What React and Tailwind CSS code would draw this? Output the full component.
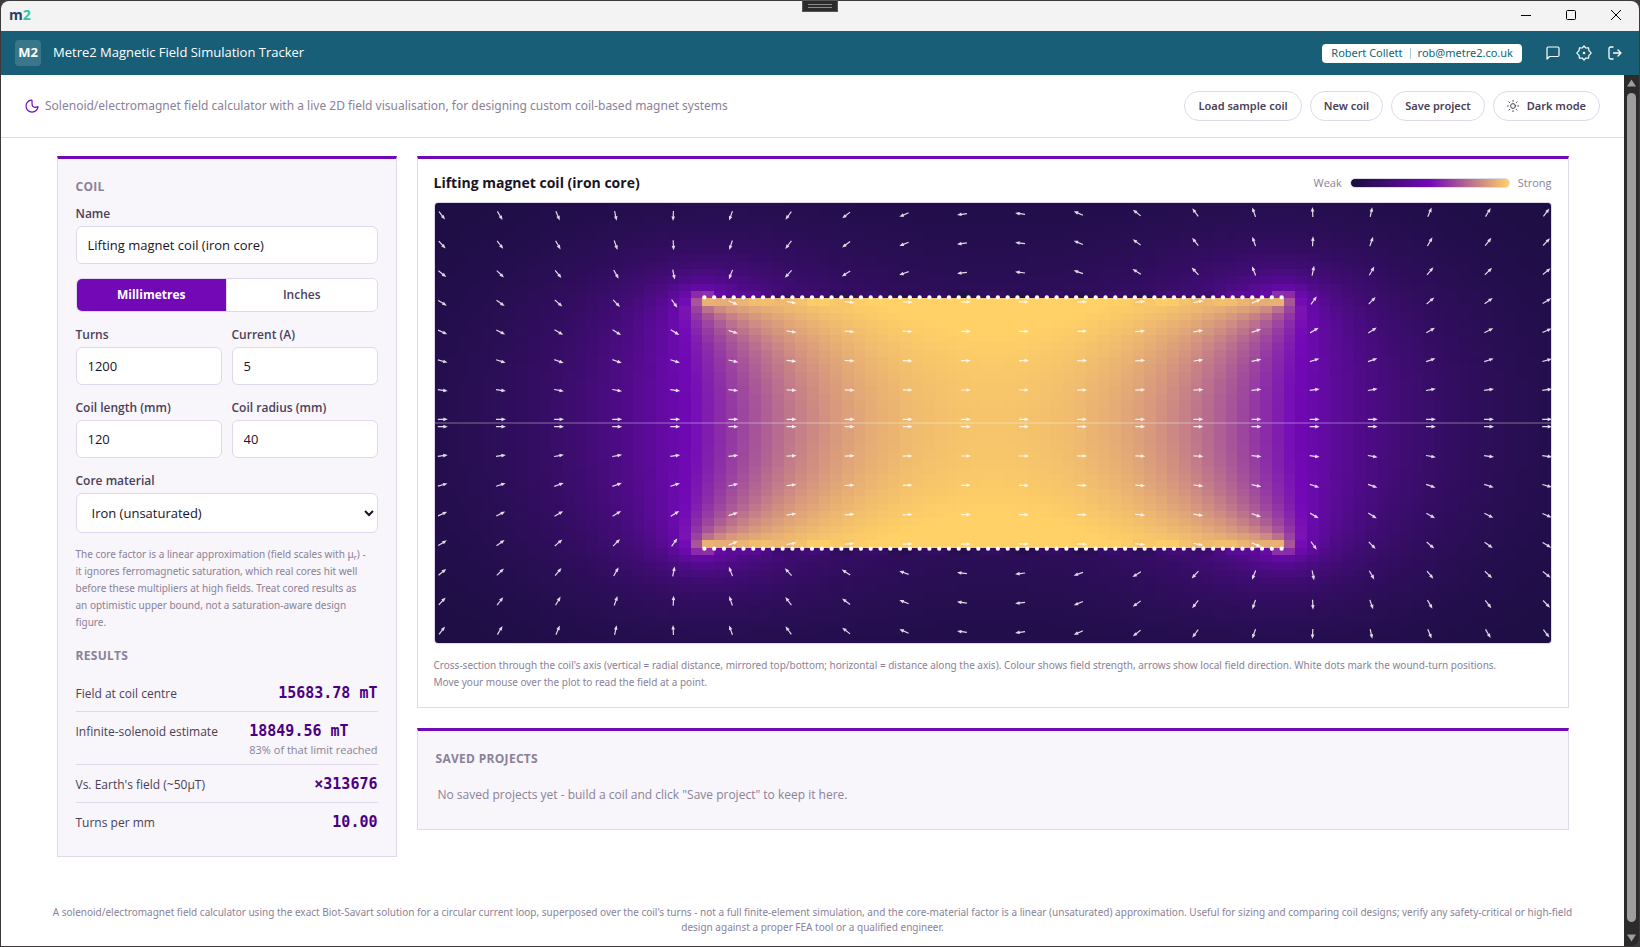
import { useMemo, useState } from "react";

const PLOT_W = 1116;
const PLOT_H = 440;
const COLS = 96;
const HALF_ROWS = 30;
const LOOPS = 60;

const STOPS = [
  [22, 15, 58],
  [114, 9, 183],
  [255, 209, 102],
];

// complete elliptic integrals K(m) and E(m) by arithmetic-geometric mean
const elliptic = (m) => {
  let a = 1;
  let b = Math.sqrt(1 - m);
  let c = Math.sqrt(m);
  let sum = (c * c) / 2;
  let pow = 1;
  for (let i = 0; i < 12 && Math.abs(c) > 1e-9; i++) {
    const next = (a + b) / 2;
    c = (a - b) / 2;
    b = Math.sqrt(a * b);
    a = next;
    sum += pow * c * c;
    pow *= 2;
  }
  const K = Math.PI / (2 * a);
  return [K, K * (1 - sum)];
};

// field of one loop of radius R at (r, z), arbitrary units
const loopField = (R, r, z) => {
  const q = (R + r) * (R + r) + z * z;
  const d = (R - r) * (R - r) + z * z;
  const [K, E] = elliptic((4 * R * r) / q);
  const s = Math.sqrt(q);
  const bz = (K + ((R * R - r * r - z * z) / d) * E) / s;
  const br = ((z / r) * (-K + ((R * R + r * r + z * z) / d) * E)) / s;
  return [br, bz];
};

const coilField = (length, R, r, z) => {
  let br = 0;
  let bz = 0;
  for (let i = 0; i < LOOPS; i++) {
    const zi = -length / 2 + (length * i) / (LOOPS - 1);
    const [a, b] = loopField(R, r, z - zi);
    br += a;
    bz += b;
  }
  return [br, bz];
};

const fieldColour = (t) => {
  const k = Math.min(1, Math.max(0, t)) * 2;
  const i = k < 1 ? 0 : 1;
  const f = k - i;
  const mix = STOPS[i].map((v, n) => Math.round(v + (STOPS[i + 1][n] - v) * f));
  return `rgb(${mix.join(",")})`;
};

const FieldPlot = ({ length, radius }) => {
  const { cells, arrows, dots } = useMemo(() => {
    const zMax = length / 2 + radius * 1.4;
    const rMax = radius * 1.75;
    const cw = PLOT_W / COLS;
    const ch = PLOT_H / (HALF_ROWS * 2);
    const mid = PLOT_H / 2;
    const cells = [];
    const arrows = [];
    const dots = [];
    const max = coilField(length, radius, 0.01, 0)[1] * 1.03;

    for (let i = 0; i < COLS; i++) {
      const z = (i / (COLS - 1)) * 2 * zMax - zMax;
      for (let j = 0; j < HALF_ROWS; j++) {
        const r = Math.max(0.01, (j / (HALF_ROWS - 1)) * rMax);
        const [br, bz] = coilField(length, radius, r, z);
        const fill = fieldColour(Math.pow(Math.hypot(br, bz) / max, 1.06));
        cells.push({ x: i * cw, y: mid - (j + 1) * ch, fill });
        cells.push({ x: i * cw, y: mid + j * ch, fill });
        if (i % 5 === 0 && j % 4 === 0) {
          const x = (i + 0.5) * cw;
          const dy = (j + 0.5) * ch;
          const angle = (Math.atan2(br, bz) * 180) / Math.PI;
          arrows.push({ x, y: mid - dy, angle: -angle });
          arrows.push({ x, y: mid + dy, angle });
        }
      }
    }

    for (let i = 0; i < LOOPS; i++) {
      const z = -length / 2 + (length * i) / (LOOPS - 1);
      const x = ((z + zMax) / (2 * zMax)) * PLOT_W;
      const dy = (radius / rMax) * mid;
      dots.push({ x, y: mid - dy }, { x, y: mid + dy });
    }
    return { cells, arrows, dots };
  }, [length, radius]);

  return (
    <svg
      viewBox={`0 0 ${PLOT_W} ${PLOT_H}`}
      className="block w-full h-auto rounded border border-[#e0d8ec]"
      role="img"
      aria-label="Field strength and direction"
    >
      <g shapeRendering="crispEdges">
        {cells.map((c, n) => (
          <rect
            key={n}
            x={c.x}
            y={c.y}
            width={PLOT_W / COLS}
            height={PLOT_H / (HALF_ROWS * 2)}
            fill={c.fill}
          />
        ))}
      </g>
      <rect x="0" y="219" width={PLOT_W} height="2" fill="#fff" opacity="0.2" />
      {dots.map((d, n) => (
        <circle key={n} cx={d.x} cy={d.y} r="2.1" fill="#fff" />
      ))}
      {arrows.map((a, n) => (
        <g
          key={n}
          transform={`translate(${a.x} ${a.y}) rotate(${a.angle})`}
          opacity="0.85"
        >
          <path d="M-3 0H4" stroke="#fff" strokeWidth="1.2" />
          <path d="M7 0L2.5 -1.8V1.8Z" fill="#fff" />
        </g>
      ))}
    </svg>
  );
};

const inputClass =
  "w-full h-[38px] px-[11px] bg-white border border-[#e0d8ec] rounded-md text-[13px] text-[#1a1326]";
const labelClass =
  "block mb-[3px] text-xs leading-[18px] font-semibold text-[#4a4158]";
const headingClass =
  "text-xs leading-5 font-bold uppercase tracking-wide text-[#8a8298]";
const noteClass =
  "font-['Noto_Sans',sans-serif] text-[10px] leading-[17px] text-[#8a8298]";
const pillClass =
  "flex items-center gap-2 h-[30px] px-[13px] bg-white border border-[#e0d8ec] rounded-full font-['Noto_Sans',sans-serif] text-[11px] font-semibold text-[#4a4158]";

const Field = ({ id, label, value, onChange }) => (
  <div>
    <label htmlFor={id} className={labelClass}>
      {label}
    </label>
    <input
      id={id}
      className={inputClass}
      value={value}
      onChange={(e) => onChange(e.target.value)}
    />
  </div>
);

const ResultRow = ({ label, value, note }) => (
  <div className="flex justify-between pt-[9px] pb-[7px] border-b border-[#e0d8ec] last:border-b-0">
    <dt className="text-xs leading-[21px] text-[#4a4158]">{label}</dt>
    <dd>
      <div className="font-['DejaVu_Sans_Mono',monospace] text-[15px] leading-[21px] font-bold text-[#4b0082]">
        {value}
      </div>
      {note && (
        <div className="text-[11px] leading-[15px] text-[#8a8298]">{note}</div>
      )}
    </dd>
  </div>
);

const TitleBar = () => (
  <div className="flex items-center justify-between h-[30px] shrink-0 bg-[#f3f3f3] rounded-t-lg pl-2 pr-[18px] pb-0.5">
    <div className="text-sm leading-5 font-bold text-[#1d4468]">
      m<span className="text-[#2fc9a0]">2</span>
    </div>
    <div className="flex gap-[35px] text-black">
      <button aria-label="Minimise">
        <svg width="10" height="10" viewBox="0 0 10 10">
          <path d="M0 5.5H10" stroke="currentColor" />
        </svg>
      </button>
      <button aria-label="Maximise">
        <svg width="10" height="10" viewBox="0 0 10 10" fill="none">
          <rect x="0.5" y="0.5" width="9" height="9" rx="1" stroke="currentColor" />
        </svg>
      </button>
      <button aria-label="Close">
        <svg width="10" height="10" viewBox="0 0 10 10">
          <path d="M0 0L10 10M10 0L0 10" stroke="currentColor" />
        </svg>
      </button>
    </div>
  </div>
);

const AppHeader = () => (
  <header className="flex items-center justify-between h-11 shrink-0 bg-[#175e76] text-white pl-3.5 pr-[17px]">
    <div className="flex items-center gap-3">
      <div className="flex items-center justify-center size-[26px] rounded bg-white/15 text-[13px] font-bold">
        M2
      </div>
      <h1 className="text-[13px] font-medium">
        Metre2 Magnetic Field Simulation Tracker
      </h1>
    </div>
    <div className="flex items-center">
      <div className="flex items-center h-[19px] px-[9px] mr-6 bg-white rounded text-[#0f6674] font-['Noto_Sans',sans-serif] text-[11px]">
        <span>Robert Collett</span>
        <span className="w-px h-[11px] mx-[7px] bg-[#a9cdd3]" />
        <span>rob@metre2.co.uk</span>
      </div>
      <div className="flex items-center gap-4">
        <button aria-label="Messages">
          <svg width="14" height="14" viewBox="0 0 14 14" fill="none">
            <path
              d="M1 13V2.2Q1 1 2.2 1H11.8Q13 1 13 2.2V9.3Q13 10.5 11.8 10.5H3.5Z"
              stroke="currentColor"
              strokeWidth="1.2"
              strokeLinejoin="round"
            />
          </svg>
        </button>
        <button aria-label="Settings">
          <svg width="16" height="16" viewBox="0 0 16 16" fill="none">
            <path
              d="M8 1L9.8 3L12.6 2.8L12.9 5.6L15 7.6V8.4L12.9 10.4L12.6 13.2L9.8 13L8 15L6.2 13L3.4 13.2L3.1 10.4L1 8.4V7.6L3.1 5.6L3.4 2.8L6.2 3Z"
              stroke="currentColor"
              strokeWidth="1.2"
              strokeLinejoin="round"
            />
            <circle cx="8" cy="8" r="1.3" fill="currentColor" />
          </svg>
        </button>
        <button aria-label="Sign out">
          <svg
            width="14"
            height="14"
            viewBox="0 0 14 14"
            fill="none"
            stroke="currentColor"
            strokeWidth="1.3"
            strokeLinecap="round"
            strokeLinejoin="round"
          >
            <path d="M5 1H2.8Q1 1 1 2.8V11.2Q1 13 2.8 13H5" />
            <path d="M5.5 7H13M10 4L13 7L10 10" />
          </svg>
        </button>
      </div>
    </div>
  </header>
);

const Toolbar = () => (
  <div className="flex items-center justify-between h-[63px] px-6 border-b border-[#e0d8ec]">
    <div className="flex items-center gap-1.5">
      <svg width="14" height="14" viewBox="0 0 14 14" fill="none">
        <path
          d="M6 1.2A6 6 0 1 0 13 7.6Q9.3 9.3 7.6 7.2Q6.9 6.3 7 1.6Q7 0.9 6 1.2Z"
          stroke="#7209b7"
          strokeWidth="1.2"
          strokeLinejoin="round"
        />
      </svg>
      <p className="font-['Noto_Sans',sans-serif] text-xs text-[#8a8298]">
        Solenoid/electromagnet field calculator with a live 2D field
        visualisation, for designing custom coil-based magnet systems
      </p>
    </div>
    <div className="flex gap-2">
      <button className={pillClass}>Load sample coil</button>
      <button className={pillClass}>New coil</button>
      <button className={pillClass}>Save project</button>
      <button className={pillClass}>
        <svg
          width="12"
          height="12"
          viewBox="0 0 12 12"
          fill="none"
          stroke="currentColor"
          strokeLinecap="round"
        >
          <circle cx="6" cy="6" r="2.4" />
          <path d="M6 0.3V1.3M6 10.7V11.7M0.3 6H1.3M10.7 6H11.7M1.9 1.9L2.6 2.6M9.4 9.4L10.1 10.1M1.9 10.1L2.6 9.4M9.4 2.6L10.1 1.9" />
        </svg>
        Dark mode
      </button>
    </div>
  </div>
);

const CoilPanel = ({ coil, setCoil }) => {
  const update = (key) => (value) => setCoil({ ...coil, [key]: value });

  return (
    <section className="w-[340px] shrink-0 bg-[#f8f5fb] border border-[#e0d8ec] border-t-3 border-t-[#7209b7] px-[18px] pt-[18px] pb-4">
      <h2 className={headingClass}>Coil</h2>
      <div className="mt-2">
        <Field
          id="name"
          label="Name"
          value={coil.name}
          onChange={update("name")}
        />
      </div>
      <div className="flex h-[34px] my-3.5 border border-[#e0d8ec] rounded-md overflow-hidden text-xs">
        <button className="flex-1 bg-[#7209b7] text-white font-bold">
          Millimetres
        </button>
        <button className="flex-1 bg-white text-[#4a4158] font-semibold border-l border-[#e0d8ec]">
          Inches
        </button>
      </div>
      <div className="grid grid-cols-2 gap-x-2.5 gap-y-3.5">
        <Field
          id="turns"
          label="Turns"
          value={coil.turns}
          onChange={update("turns")}
        />
        <Field
          id="current"
          label="Current (A)"
          value={coil.current}
          onChange={update("current")}
        />
        <Field
          id="length"
          label="Coil length (mm)"
          value={coil.length}
          onChange={update("length")}
        />
        <Field
          id="radius"
          label="Coil radius (mm)"
          value={coil.radius}
          onChange={update("radius")}
        />
      </div>
      <div className="mt-3.5">
        <label htmlFor="core" className={labelClass}>
          Core material
        </label>
        <select
          id="core"
          className="w-full h-10 px-[11px] bg-white border border-[#e0d8ec] rounded-md text-[13px] text-[#1a1326]"
        >
          <option>Iron (unsaturated)</option>
        </select>
      </div>
      <p className={`${noteClass} mt-[13px] pr-2`}>
        The core factor is a linear approximation (field scales with μ
        <sub>r</sub>) - it ignores ferromagnetic saturation, which real cores
        hit well before these multipliers at high fields. Treat cored results as
        an optimistic upper bound, not a saturation-aware design figure.
      </p>
      <h2 className={`${headingClass} mt-[15px]`}>Results</h2>
      <dl className="mt-2">
        <ResultRow label="Field at coil centre" value="15683.78 mT" />
        <ResultRow
          label="Infinite-solenoid estimate"
          value="18849.56 mT"
          note="83% of that limit reached"
        />
        <ResultRow label="Vs. Earth's field (~50μT)" value="×313676" />
        <ResultRow label="Turns per mm" value="10.00" />
      </dl>
    </section>
  );
};

const App = () => {
  const [coil, setCoil] = useState({
    name: "Lifting magnet coil (iron core)",
    turns: "1200",
    current: "5",
    length: "120",
    radius: "40",
  });

  return (
    <div className="relative flex flex-col h-screen p-px bg-[#3c3a3b] font-['Open_Sans',sans-serif]">
      <TitleBar />
      {/* snap handle over the title bar */}
      <div className="absolute top-0 left-1/2 -translate-x-1/2 w-9 h-3 bg-[#2b2b2b] border border-[#555] flex flex-col justify-center items-center gap-0.5">
        <span className="w-6 h-px bg-[#8a8a8a]" />
        <span className="w-6 h-px bg-[#8a8a8a]" />
      </div>
      <AppHeader />
      <div className="flex flex-1 min-h-0">
        <div className="flex-1 min-w-0 bg-white overflow-hidden">
          <Toolbar />
          <main className="flex items-start gap-5 max-w-[1560px] mx-auto px-6 pt-[18px]">
            <CoilPanel coil={coil} setCoil={setCoil} />
            <div className="flex-1 min-w-0 flex flex-col gap-5">
              <section className="bg-white border border-[#e0d8ec] border-t-3 border-t-[#7209b7] px-4 pt-3.5 pb-4">
                <div className="flex items-center justify-between mb-[9px]">
                  <h2 className="text-sm leading-5 font-bold text-[#1a1326]">
                    {coil.name}
                  </h2>
                  <div className="flex items-center gap-2 text-[11px] leading-5 text-[#8a8298]">
                    Weak
                    <span className="w-40 h-2.5 rounded-full border border-[#e0d8ec] bg-linear-to-r/srgb from-[#160f3a] via-[#7209b7] to-[#ffd166]" />
                    Strong
                  </div>
                </div>
                <FieldPlot
                  length={Number(coil.length) || 120}
                  radius={Number(coil.radius) || 40}
                />
                <p className={`${noteClass} mt-[13px] pr-8`}>
                  Cross-section through the coil's axis (vertical = radial
                  distance, mirrored top/bottom; horizontal = distance along the
                  axis). Colour shows field strength, arrows show local field
                  direction. White dots mark the wound-turn positions. Move your
                  mouse over the plot to read the field at a point.
                </p>
              </section>
              <section className="bg-[#f8f5fb] border border-[#e0d8ec] border-t-3 border-t-[#7209b7] px-[18px] pt-[18px] pb-6">
                <h2 className={headingClass}>Saved projects</h2>
                <p className="mt-4 px-0.5 text-xs leading-5 text-[#8a8298]">
                  No saved projects yet - build a coil and click "Save project"
                  to keep it here.
                </p>
              </section>
            </div>
          </main>
          <footer className="mt-12 px-10 text-center font-['Noto_Sans',sans-serif] text-[10px] leading-[15px] text-[#8a8298]">
            A solenoid/electromagnet field calculator using the exact
            Biot-Savart solution for a circular current loop, superposed over
            the coil's turns - not a full finite-element simulation, and the
            core-material factor is a linear (unsaturated) approximation. Useful
            for sizing and comparing coil designs; verify any safety-critical or
            high-field design against a proper FEA tool or a qualified engineer.
          </footer>
        </div>
        <div className="flex flex-col items-center justify-between w-[15px] py-1 bg-[#2b2b2b] rounded-br-lg">
          <svg width="9" height="8" viewBox="0 0 9 8">
            <path d="M4.5 0.5L9 7.5H0Z" fill="#9e9e9e" />
          </svg>
          <div className="flex-1 w-[9px] mt-1.5 mb-3 rounded-full bg-[#9e9e9e]" />
          <svg width="9" height="8" viewBox="0 0 9 8">
            <path d="M4.5 7.5L9 0.5H0Z" fill="#9e9e9e" />
          </svg>
        </div>
      </div>
    </div>
  );
};

export default App;
